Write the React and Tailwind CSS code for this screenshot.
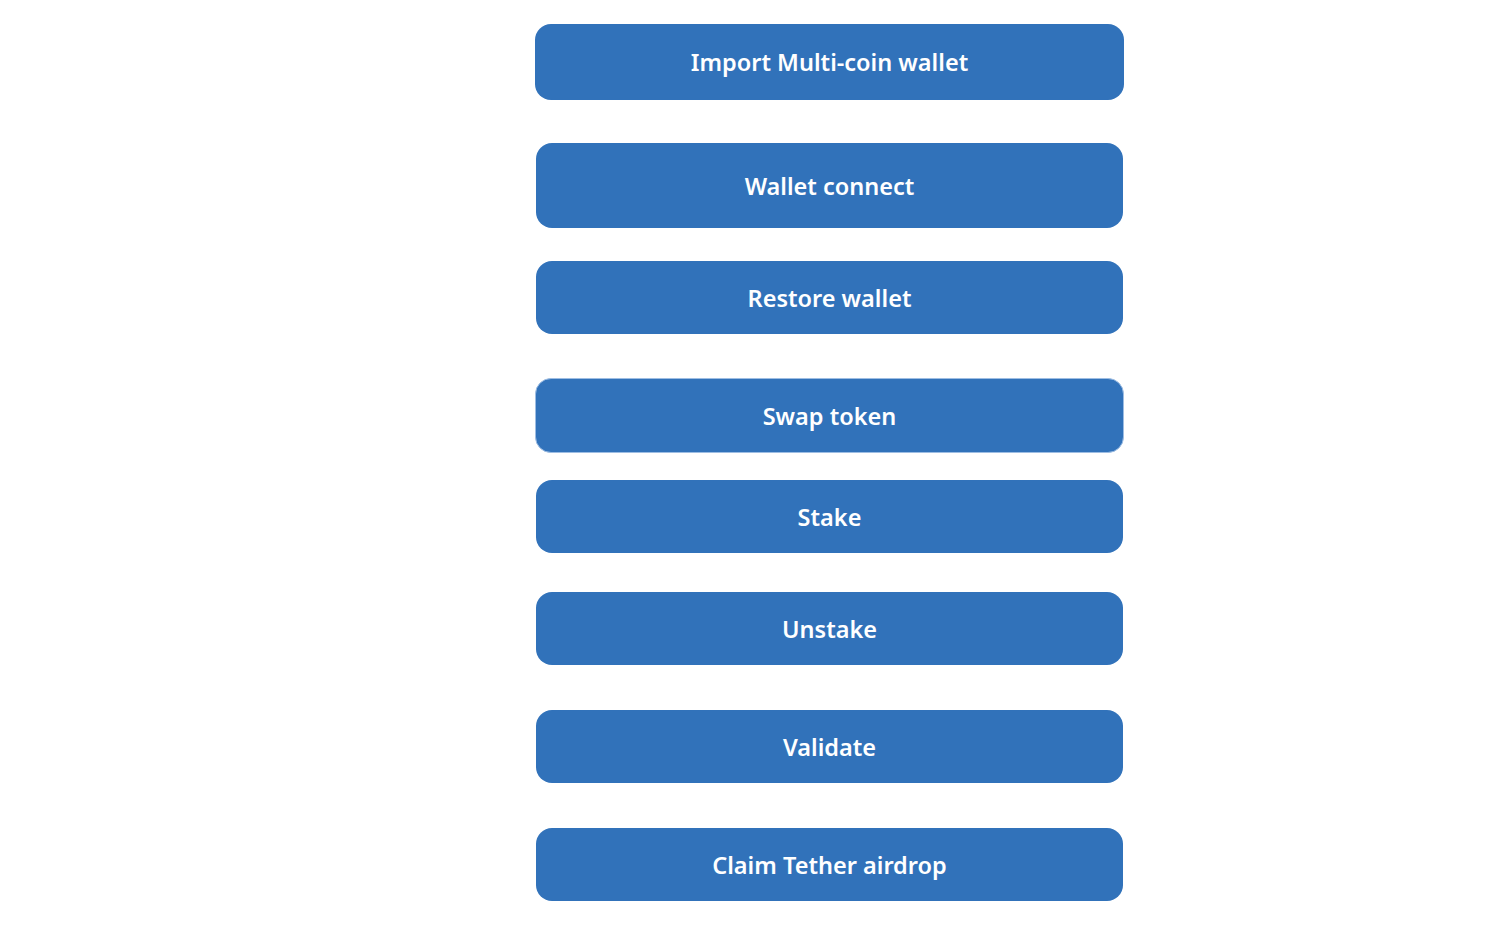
const actions = [
  { label: "Import Multi-coin wallet", cls: "mt-[24px] h-[76px] w-[589px]" },
  { label: "Wallet connect", cls: "mt-[43px] h-[85px] w-[587px] ml-px" },
  { label: "Restore wallet", cls: "mt-[33px] h-[73px] w-[587px] ml-px" },
  { label: "Swap token", cls: "mt-[44px] h-[75px] w-[589px] border border-[#9dbde3]" },
  { label: "Stake", cls: "mt-[27px] h-[73px] w-[587px] ml-px" },
  { label: "Unstake", cls: "mt-[39px] h-[73px] w-[587px] ml-px" },
  { label: "Validate", cls: "mt-[45px] h-[73px] w-[587px] ml-px" },
  { label: "Claim Tether airdrop", cls: "mt-[45px] h-[73px] w-[587px] ml-px" },
];

export default function App() {
  return (
    <div className="min-h-[940px] w-full bg-white">
      <div className="ml-[535px] flex w-[589px] flex-col">
        {actions.map((a) => (
          <button
            key={a.label}
            className={`${a.cls} flex items-center justify-center rounded-[16px] bg-[#3172ba] pt-[2px] text-[23.5px] font-semibold text-white`}
            style={{ fontFamily: '"Noto Sans", "Open Sans", sans-serif' }}
          >
            {a.label}
          </button>
        ))}
      </div>
    </div>
  );
}
